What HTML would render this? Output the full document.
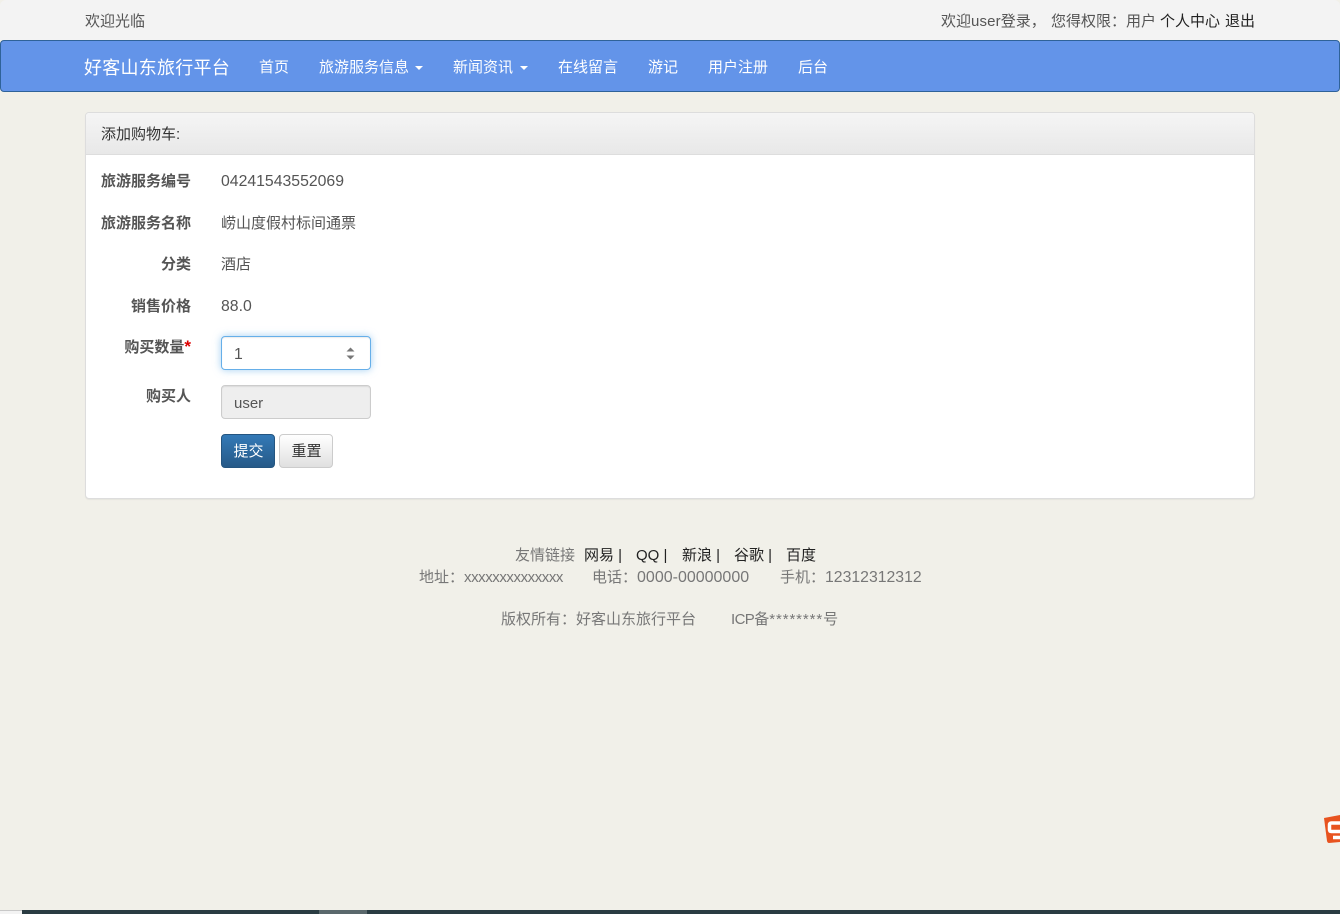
<!DOCTYPE html>
<html lang="zh-CN"><head><meta charset="utf-8"><title>添加购物车</title>
<style>
*{box-sizing:border-box}
html,body{margin:0;padding:0}
body{width:1340px;height:914px;overflow:hidden;position:relative;background:#f1f0e9;font:15px/20px "Liberation Sans","Noto Sans CJK SC",sans-serif;color:#555}
.t{position:absolute;white-space:nowrap;line-height:20px}
.top{position:absolute;left:0;top:0;width:1340px;height:40px;background:#f3f3f3;border-radius:6px 6px 0 0}
.nav{position:absolute;left:0;top:40px;width:1340px;height:52px;background:#6394e9;border:1px solid #2f6299;border-radius:4px}
.w{color:#fff}
.k{color:#222}
.g{color:#777}
.n{font-size:15.8px}
.car{position:absolute;width:0;height:0;border-left:4px solid transparent;border-right:4px solid transparent;border-top:4px solid #fff}
.panel{position:absolute;left:85px;top:112px;width:1170px;height:387px;background:#fff;border:1px solid #ddd;border-radius:4px;box-shadow:0 1px 1px rgba(0,0,0,.05)}
.ph{position:absolute;left:0;top:0;width:1168px;height:42px;background:linear-gradient(#f5f5f5,#e8e8e8);border-bottom:1px solid #ddd;border-radius:3px 3px 0 0}
.lb{font-weight:bold;text-align:right;width:120px;left:71px;color:#555}
.inp{position:absolute;left:221px;width:150px;height:34px;border-radius:4px;border:1px solid #ccc}
.btn{position:absolute;top:434px;height:34px;border-radius:4px;text-align:center;line-height:34px;padding-left:1px}
</style></head><body>
<div class="top"></div>
<span class="t" style="left:85px;top:12px">欢迎光临</span>
<span class="t" style="left:941px;top:12px">欢迎<span style="letter-spacing:.15px">user</span>登录，</span>
<span class="t" style="left:1051px;top:12px">您得权限：用户</span>
<span class="t k" style="left:1160px;top:12px">个人中心</span>
<span class="t k" style="left:1225px;top:12px">退出</span>

<div class="nav"></div>
<span class="t w" style="left:84px;top:58px;font-size:18px;letter-spacing:.25px">好客山东旅行平台</span>
<span class="t w" style="left:259px;top:58px">首页</span>
<span class="t w" style="left:319px;top:58px">旅游服务信息</span><i class="car" style="left:415px;top:66px"></i>
<span class="t w" style="left:453px;top:58px">新闻资讯</span><i class="car" style="left:520px;top:66px"></i>
<span class="t w" style="left:558px;top:58px">在线留言</span>
<span class="t w" style="left:648px;top:58px">游记</span>
<span class="t w" style="left:708px;top:58px">用户注册</span>
<span class="t w" style="left:798px;top:58px">后台</span>

<div class="panel"><div class="ph"></div></div>
<span class="t" style="left:101px;top:125px;color:#333">添加购物车:</span>

<span class="t lb" style="top:172px">旅游服务编号</span>
<span class="t n" style="left:221px;top:172px">04241543552069</span>
<span class="t lb" style="top:214px">旅游服务名称</span>
<span class="t" style="left:221px;top:214px">崂山度假村标间通票</span>
<span class="t lb" style="top:255px">分类</span>
<span class="t" style="left:221px;top:255px">酒店</span>
<span class="t lb" style="top:297px">销售价格</span>
<span class="t n" style="left:221px;top:297px">88.0</span>
<span class="t lb" style="top:337px">购买数量<span style="color:#d00;font-size:17px">*</span></span>
<div class="inp" style="top:336px;background:#fff;border-color:#66afe9;box-shadow:inset 0 1px 1px rgba(0,0,0,.075),0 0 8px rgba(102,175,233,.6)"></div>
<span class="t n" style="left:234px;top:345px">1</span>
<svg style="position:absolute;left:346px;top:347px" width="9" height="13" viewBox="0 0 9 13"><path d="M4.5 0.5L8.5 4.5H0.5Z M4.5 12.5L0.5 8.5H8.5Z" fill="#777"/></svg>
<span class="t lb" style="top:387px">购买人</span>
<div class="inp" style="top:385px;background:#eee;box-shadow:inset 0 1px 1px rgba(0,0,0,.075)"></div>
<span class="t" style="left:234px;top:394px">user</span>
<div class="btn" style="left:221px;width:54px;background:linear-gradient(#337ab7,#265a88);border:1px solid #245580;color:#fff">提交</div>
<div class="btn" style="left:279px;width:54px;background:linear-gradient(#fff,#e0e0e0);border:1px solid #ccc;color:#333">重置</div>

<span class="t g" style="left:515px;top:546px">友情链接</span>
<span class="t k" style="left:584px;top:546px">网易 |</span>
<span class="t k" style="left:636px;top:546px">QQ |</span>
<span class="t k" style="left:682px;top:546px">新浪 |</span>
<span class="t k" style="left:734px;top:546px">谷歌 |</span>
<span class="t k" style="left:786px;top:546px">百度</span>
<span class="t g" style="left:419px;top:568px">地址：<span style="letter-spacing:-.43px">xxxxxxxxxxxxxx</span></span>
<span class="t g" style="left:592px;top:568px">电话：<span style="font-size:16px">0000-00000000</span></span>
<span class="t g" style="left:780px;top:568px">手机：<span style="font-size:15.8px">12312312312</span></span>
<span class="t g" style="left:501px;top:610px">版权所有：好客山东旅行平台</span>
<span class="t g" style="left:731px;top:610px"><span style="letter-spacing:-.6px">ICP</span>备<span style="letter-spacing:.9px">********</span>号</span>

<svg style="position:absolute;left:1324px;top:814px" width="16" height="30" viewBox="0 0 16 30"><path d="M0 4L16 1V28L5 29Q3.500 29 3 27Z" fill="#e8531f"/><path d="M16 9H7.500Q5.500 9 5.500 11V15.500Q5.500 17.500 7.500 17.500H16M16 23.500H9" fill="none" stroke="#fff" stroke-width="3.5"/></svg>

<div style="position:absolute;left:0;top:910px;width:22px;height:4px;background:#f3f3f3;border-top:1px solid #c8c8c8"></div>
<div style="position:absolute;left:22px;top:910px;width:1318px;height:4px;background:#2a3c42"></div>
<div style="position:absolute;left:319px;top:910px;width:48px;height:4px;background:#5a686c"></div>
</body></html>
